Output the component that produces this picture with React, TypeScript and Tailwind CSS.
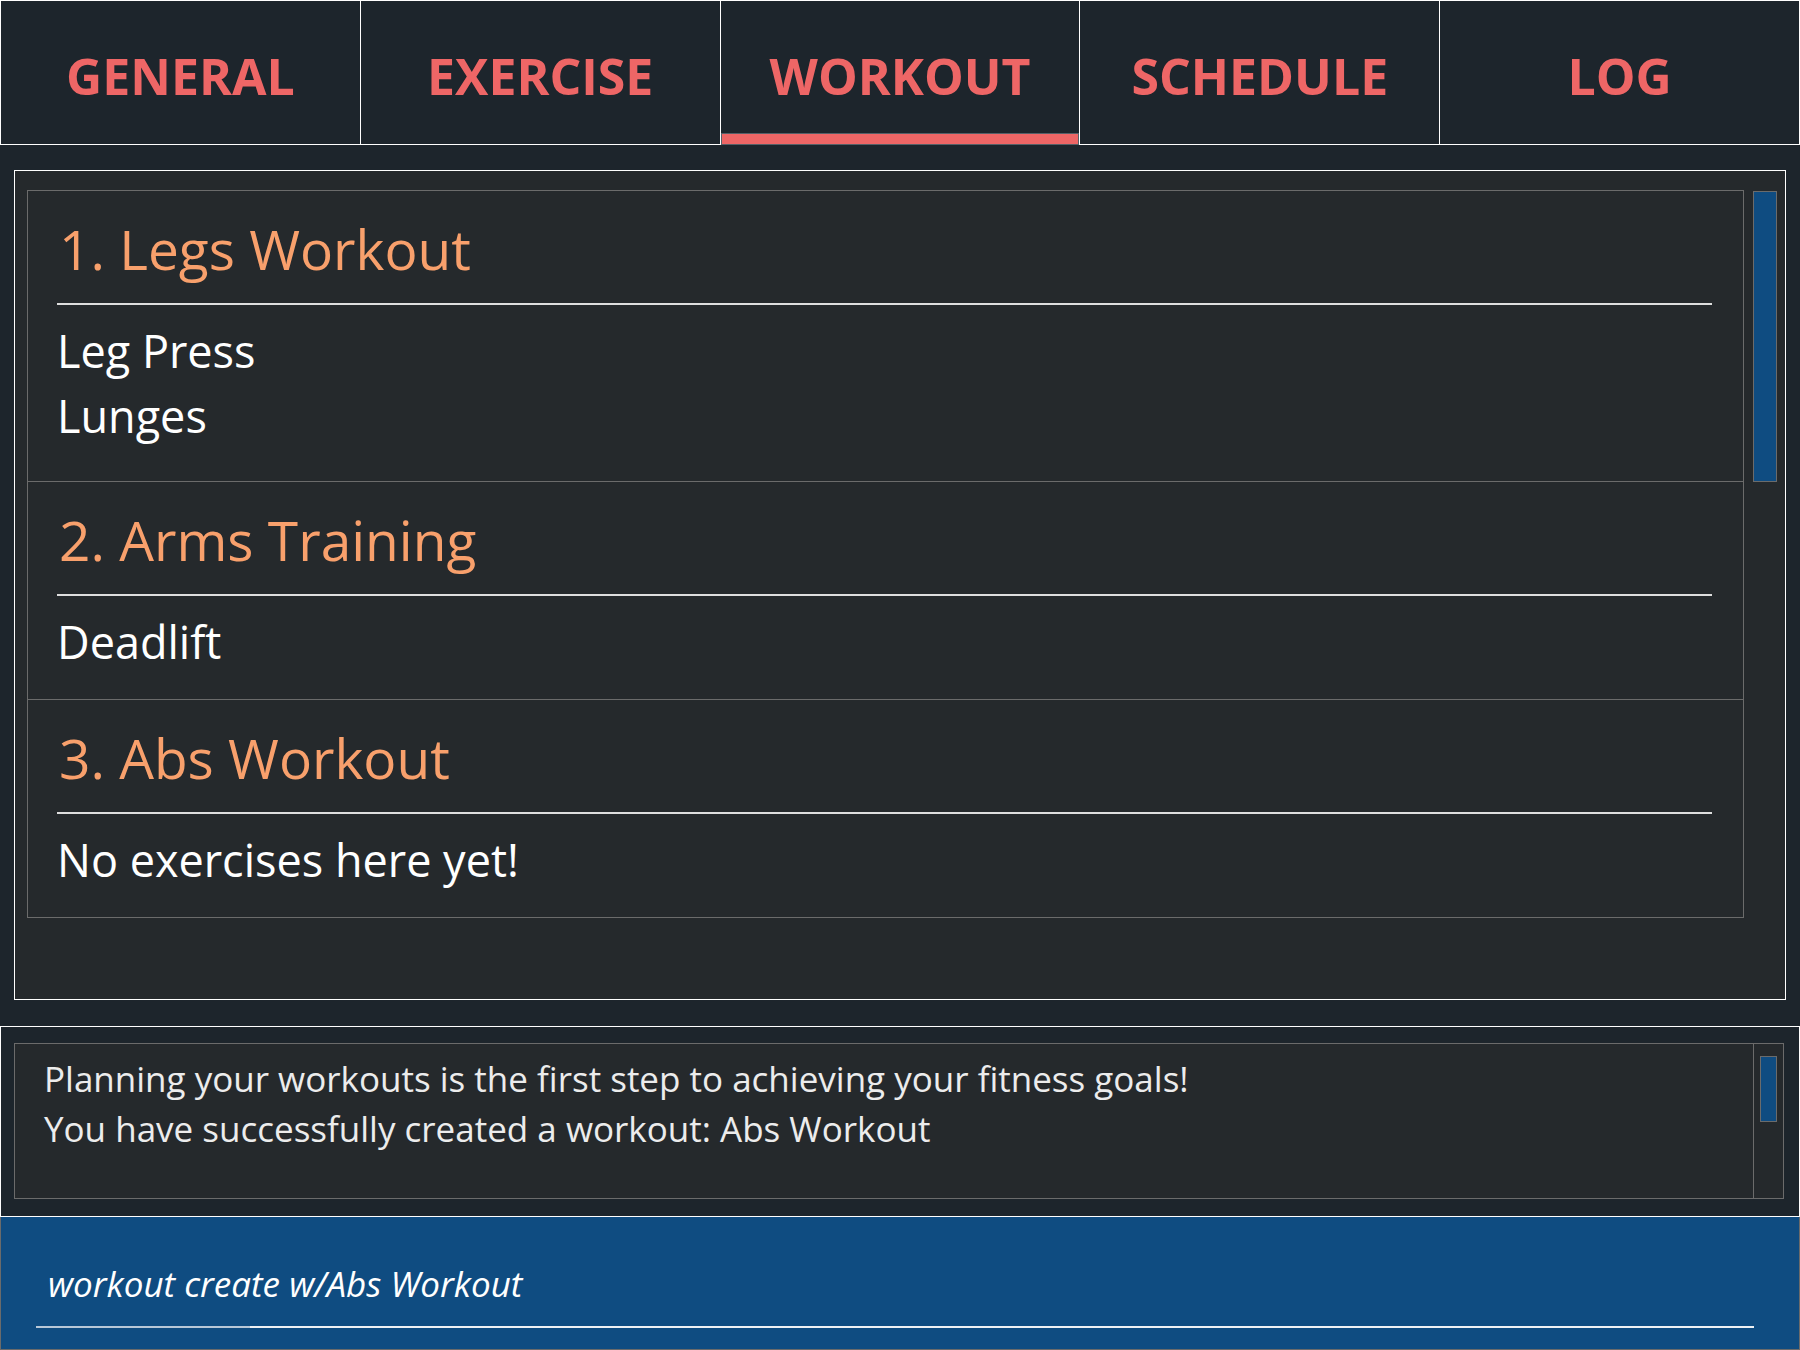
const tabs = ["GENERAL", "EXERCISE", "WORKOUT", "SCHEDULE", "LOG"];

const workouts = [
  { title: "1. Legs Workout", exercises: ["Leg Press", "Lunges"] },
  { title: "2. Arms Training", exercises: ["Deadlift"] },
  { title: "3. Abs Workout", exercises: [] as string[] },
];

export default function App() {
  return (
    <div className="w-[1800px] h-[1350px] bg-[#1d252c] flex flex-col font-['Open_Sans',sans-serif] overflow-hidden">
      {/* tab bar */}
      <div className="flex h-[145px] border-t border-l border-white">
        {tabs.map(t => {
          const active = t === "WORKOUT";
          return (
            <div key={t} className={"flex-1 flex flex-col border-r border-white " + (active ? "" : "border-b")}>
              <div className="flex-1 pt-[50px] text-center text-[50px] leading-[50px] font-bold text-[#ee6666]">{t}</div>
              {active && <div className="h-[12px] bg-[#ee6666] border border-[#566068]" />}
            </div>
          );
        })}
      </div>

      {/* workout list panel */}
      <div className="mx-[14px] mt-[25px] h-[830px] border border-white bg-[#25292c] flex pt-[19px] pl-[12px] pr-[8px]">
        <div className="flex-1 self-start border-t border-x border-[#6b6b6b]">
          {workouts.map(w => (
            <div key={w.title} className={"border-b border-[#6b6b6b] pl-[29px] pr-[31px] pt-[21px] " + (w.exercises.length > 1 ? "pb-[33px]" : "pb-[25px]")}>
              <div className="ml-[2px] text-[55px] leading-[74px] text-[#f8a06c]">{w.title}</div>
              <div className="mt-[17px] h-[2px] bg-[#dedede]" />
              <div className="mt-[13px] text-[45px] leading-[65px] text-white">
                {w.exercises.length ? w.exercises.map(e => <div key={e}>{e}</div>) : <div>No exercises here yet!</div>}
              </div>
            </div>
          ))}
        </div>
        <div className="ml-[9px] w-[24px]">
          <div className="mt-px h-[291px] bg-[#0f4c81] border border-[#6b6b6b]" />
        </div>
      </div>

      {/* result display */}
      <div className="mt-[26px] h-[191px] border border-white pt-[16px] pl-[13px] pr-[15px] pb-[17px]">
        <div className="flex h-full border border-[#6b6b6b] bg-[#25292c]">
          <div className="flex-1 pl-[29px] pt-[10px] text-[35px] leading-[50px] text-[#ececec]">
            <div>Planning your workouts is the first step to achieving your fitness goals!</div>
            <div>You have successfully created a workout: Abs Workout</div>
          </div>
          <div className="w-[30px] border-l border-[#6b6b6b] pl-[6px] pt-[12px]">
            <div className="w-[17px] h-[66px] bg-[#0f4c81] border border-[#6b6b6b]" />
          </div>
        </div>
      </div>

      {/* command box */}
      <div className="h-[133px] bg-[#0f4c81] border-x border-b border-[#6b6b6b] pl-[35px] pr-[45px] pt-[47px]">
        <div className="ml-[12px] text-[35px] leading-[40px] italic text-white">workout create w/Abs Workout</div>
        <div className="mt-[22px] h-[2px] flex">
          <div className="w-[214px] bg-[#b8c8d8]" />
          <div className="flex-1 bg-[#eef1f4]" />
        </div>
      </div>
    </div>
  );
}
